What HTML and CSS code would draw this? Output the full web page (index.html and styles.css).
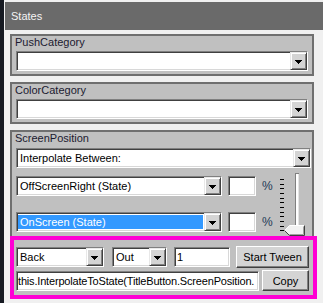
FILE: index.html
```html
<!DOCTYPE html>
<html lang="en">
<head>
    <meta charset="UTF-8">
    <meta name="viewport" content="width=device-width, initial-scale=1.0">
    <title>States</title>
    <link rel="stylesheet" href="styles.css">
</head>
<body>

<svg class="defs" width="0" height="0">
    <symbol id="arrow" viewBox="0 0 7 4">
        <path d="M0 0h7v1H0zM1 1h5v1H1zM2 2h3v1H2zM3 3h1v1H3z"/>
    </symbol>
</svg>

<div class="window">
    <div class="edge"></div>
    <div class="panel">
        <div class="title">States</div>
        <div class="content">

            <div class="group">
                <div class="legend">PushCategory</div>
                <div class="combo full">
                    <span class="value"></span>
                    <span class="drop"><svg><use href="#arrow"/></svg></span>
                </div>
            </div>

            <div class="group">
                <div class="legend">ColorCategory</div>
                <div class="combo full">
                    <span class="value"></span>
                    <span class="drop"><svg><use href="#arrow"/></svg></span>
                </div>
            </div>

            <div class="group open">
                <div class="legend">ScreenPosition</div>
                <div class="combo mode">
                    <span class="value">Interpolate Between:</span>
                    <span class="drop"><svg><use href="#arrow"/></svg></span>
                </div>
                <div class="states">
                    <div class="state-rows">
                        <div class="state-row">
                            <div class="combo state">
                                <span class="value">OffScreenRight (State)</span>
                                <span class="drop"><svg><use href="#arrow"/></svg></span>
                            </div>
                            <input class="textbox pct" type="text" value="">
                            <span class="pct-sign">%</span>
                        </div>
                        <div class="state-row">
                            <div class="combo state">
                                <span class="value selected">OnScreen (State)</span>
                                <span class="drop"><svg><use href="#arrow"/></svg></span>
                            </div>
                            <input class="textbox pct" type="text" value="">
                            <span class="pct-sign">%</span>
                        </div>
                    </div>
                    <svg class="slider" width="30" height="64" viewBox="0 0 30 64" shape-rendering="crispEdges">
                        <g fill="#000">
                            <rect x="2" y="7" width="4" height="1"/>
                            <rect x="2" y="12" width="4" height="1"/>
                            <rect x="2" y="16" width="4" height="1"/>
                            <rect x="2" y="21" width="4" height="1"/>
                            <rect x="2" y="26" width="4" height="1"/>
                            <rect x="2" y="30" width="4" height="1"/>
                            <rect x="2" y="35" width="4" height="1"/>
                            <rect x="2" y="40" width="4" height="1"/>
                            <rect x="2" y="44" width="4" height="1"/>
                            <rect x="2" y="49" width="4" height="1"/>
                            <rect x="2" y="54" width="4" height="1"/>
                            <rect x="2" y="58" width="4" height="1"/>
                        </g>
                        <rect x="17" y="1" width="4" height="1" fill="#808080"/>
                        <rect x="17" y="1" width="1" height="58" fill="#808080"/>
                        <rect x="18" y="2" width="2" height="57" fill="#ffffff"/>
                        <rect x="20" y="2" width="1" height="57" fill="#e4e4e4"/>
                        <g shape-rendering="auto">
                            <polygon points="6.5,58.5 11.5,53.5 26.5,53.5 26.5,63.5 11.5,63.5" fill="#f2f2f2"/>
                            <polyline points="6.5,58.5 11.5,53.5 26.5,53.5" fill="none" stroke="#ffffff"/>
                            <polyline points="26.5,53.5 26.5,63.5 11.5,63.5 6.5,58.5" fill="none" stroke="#404040"/>
                            <polyline points="25.5,54.5 25.5,62.5 11.5,62.5" fill="none" stroke="#a0a0a0"/>
                        </g>
                    </svg>
                </div>
            </div>

            <div class="tween">
                <div class="tween-row">
                    <div class="combo ease">
                        <span class="value">Back</span>
                        <span class="drop"><svg><use href="#arrow"/></svg></span>
                    </div>
                    <div class="combo dir">
                        <span class="value">Out</span>
                        <span class="drop"><svg><use href="#arrow"/></svg></span>
                    </div>
                    <input class="textbox duration" type="text" value="1">
                    <button class="btn start">Start Tween</button>
                </div>
                <div class="tween-row">
                    <input class="textbox code" type="text" value="this.InterpolateToState(TitleButton.ScreenPosition.">
                    <button class="btn copy">Copy</button>
                </div>
            </div>

        </div>
    </div>
</div>

</body>
</html>
```

FILE: styles.css
```css
body {
    margin: 0;
    background-color: #f0f0f0;
    font-family: "Liberation Sans", Arial, sans-serif;
    font-size: 11px;
    color: #000;
}

.defs {
    position: absolute;
    width: 0;
    height: 0;
}

.window {
    display: flex;
    width: 323px;
    height: 303px;
    overflow: hidden;
}

.edge {
    width: 4px;
    flex-shrink: 0;
    background-color: #161a22;
}

.panel {
    flex: 1;
    padding: 2px 0 0 1px;
}

.title {
    height: 28px;
    line-height: 28px;
    padding-left: 6px;
    background-color: #6a6a6a;
    color: #f4f4f4;
}

.content {
    padding: 4px 0 0 5px;
}

.group {
    box-sizing: border-box;
    width: 304px;
    margin-bottom: 6px;
    padding: 0 4px 3px 4px;
    background-color: #c0c0c0;
    border: 2px solid #6f6f6f;
}

.group.open {
    margin-bottom: 0;
    padding-bottom: 0;
    border-bottom: none;
}

.legend {
    height: 13px;
    line-height: 13px;
    margin-left: -1px;
    color: #1c1a30;
}

/* combo box */
.combo {
    box-sizing: border-box;
    display: flex;
    height: 20px;
    padding: 1px;
    background-color: #fff;
    border: 1px solid;
    border-color: #808080 #ffffff #ffffff #808080;
    box-shadow: inset 1px 1px #404040, inset -1px -1px #d8d8d8;
}

.combo .value {
    flex: 1;
    line-height: 16px;
    padding-left: 2px;
    white-space: nowrap;
    overflow: hidden;
}

.combo .value.selected {
    margin: 1px 1px 1px 0;
    padding-left: 2px;
    line-height: 14px;
    background-color: #3399ff;
    color: #fff;
}

.drop {
    box-sizing: border-box;
    display: flex;
    align-items: center;
    justify-content: center;
    width: 17px;
    height: 18px;
    margin: -1px -1px -1px 0;
    background-color: #d4d4d4;
    border: 1px solid;
    border-color: #e8e8e8 #404040 #404040 #e8e8e8;
    box-shadow: inset 1px 1px #ffffff, inset -1px -1px #808080;
}

.drop svg {
    width: 7px;
    height: 4px;
    margin-top: 1px;
    fill: #000;
}

.group .combo.full {
    margin-top: 2px;
    width: 292px;
}

.group .combo.mode {
    margin-top: 3px;
    width: 295px;
}

/* text box */
.textbox {
    box-sizing: border-box;
    height: 20px;
    margin: 0;
    padding: 0 2px;
    font-family: inherit;
    font-size: 11px;
    color: #000;
    background-color: #fff;
    border: 1px solid;
    border-color: #808080 #ffffff #ffffff #808080;
    box-shadow: inset 1px 1px #404040, inset -1px -1px #d8d8d8;
    outline: none;
}

.states {
    display: flex;
    height: 64px;
    margin-top: 4px;
}

.state-rows {
    display: flex;
    flex-direction: column;
    gap: 16px;
    padding-top: 4px;
}

.state-row {
    display: flex;
    align-items: center;
    height: 20px;
}

.combo.state {
    width: 206px;
}

.pct {
    width: 28px;
    margin-left: 6px;
}

.pct-sign {
    margin-left: 6px;
    font-size: 12px;
    color: #1e3a56;
}

.slider {
    display: block;
    margin-left: auto;
}

/* tween box */
.tween {
    box-sizing: border-box;
    width: 307px;
    height: 63px;
    padding: 6px 0 0 2px;
    background-color: #c0c0c0;
    border: 4px solid #ff00d4;
}

.tween-row {
    display: flex;
    align-items: center;
    height: 22px;
}

.tween-row + .tween-row {
    height: 21px;
    margin-top: 2px;
}

.combo.ease {
    width: 88px;
}

.combo.dir {
    width: 55px;
    margin-left: 8px;
}

.duration {
    width: 56px;
    margin-left: 7px;
}

.code {
    width: 243px;
    letter-spacing: -0.18px;
    padding-left: 1px;
}

.btn {
    box-sizing: border-box;
    height: 22px;
    padding: 0;
    font-family: inherit;
    font-size: 11px;
    color: #000;
    background-color: #d4d4d4;
    border: 1px solid;
    border-color: #ffffff #404040 #404040 #ffffff;
    box-shadow: inset -1px -1px #808080;
    cursor: pointer;
}

.btn.start {
    width: 73px;
    margin-left: 6px;
}

.btn.copy {
    width: 47px;
    height: 21px;
    margin-left: 3px;
}
```
